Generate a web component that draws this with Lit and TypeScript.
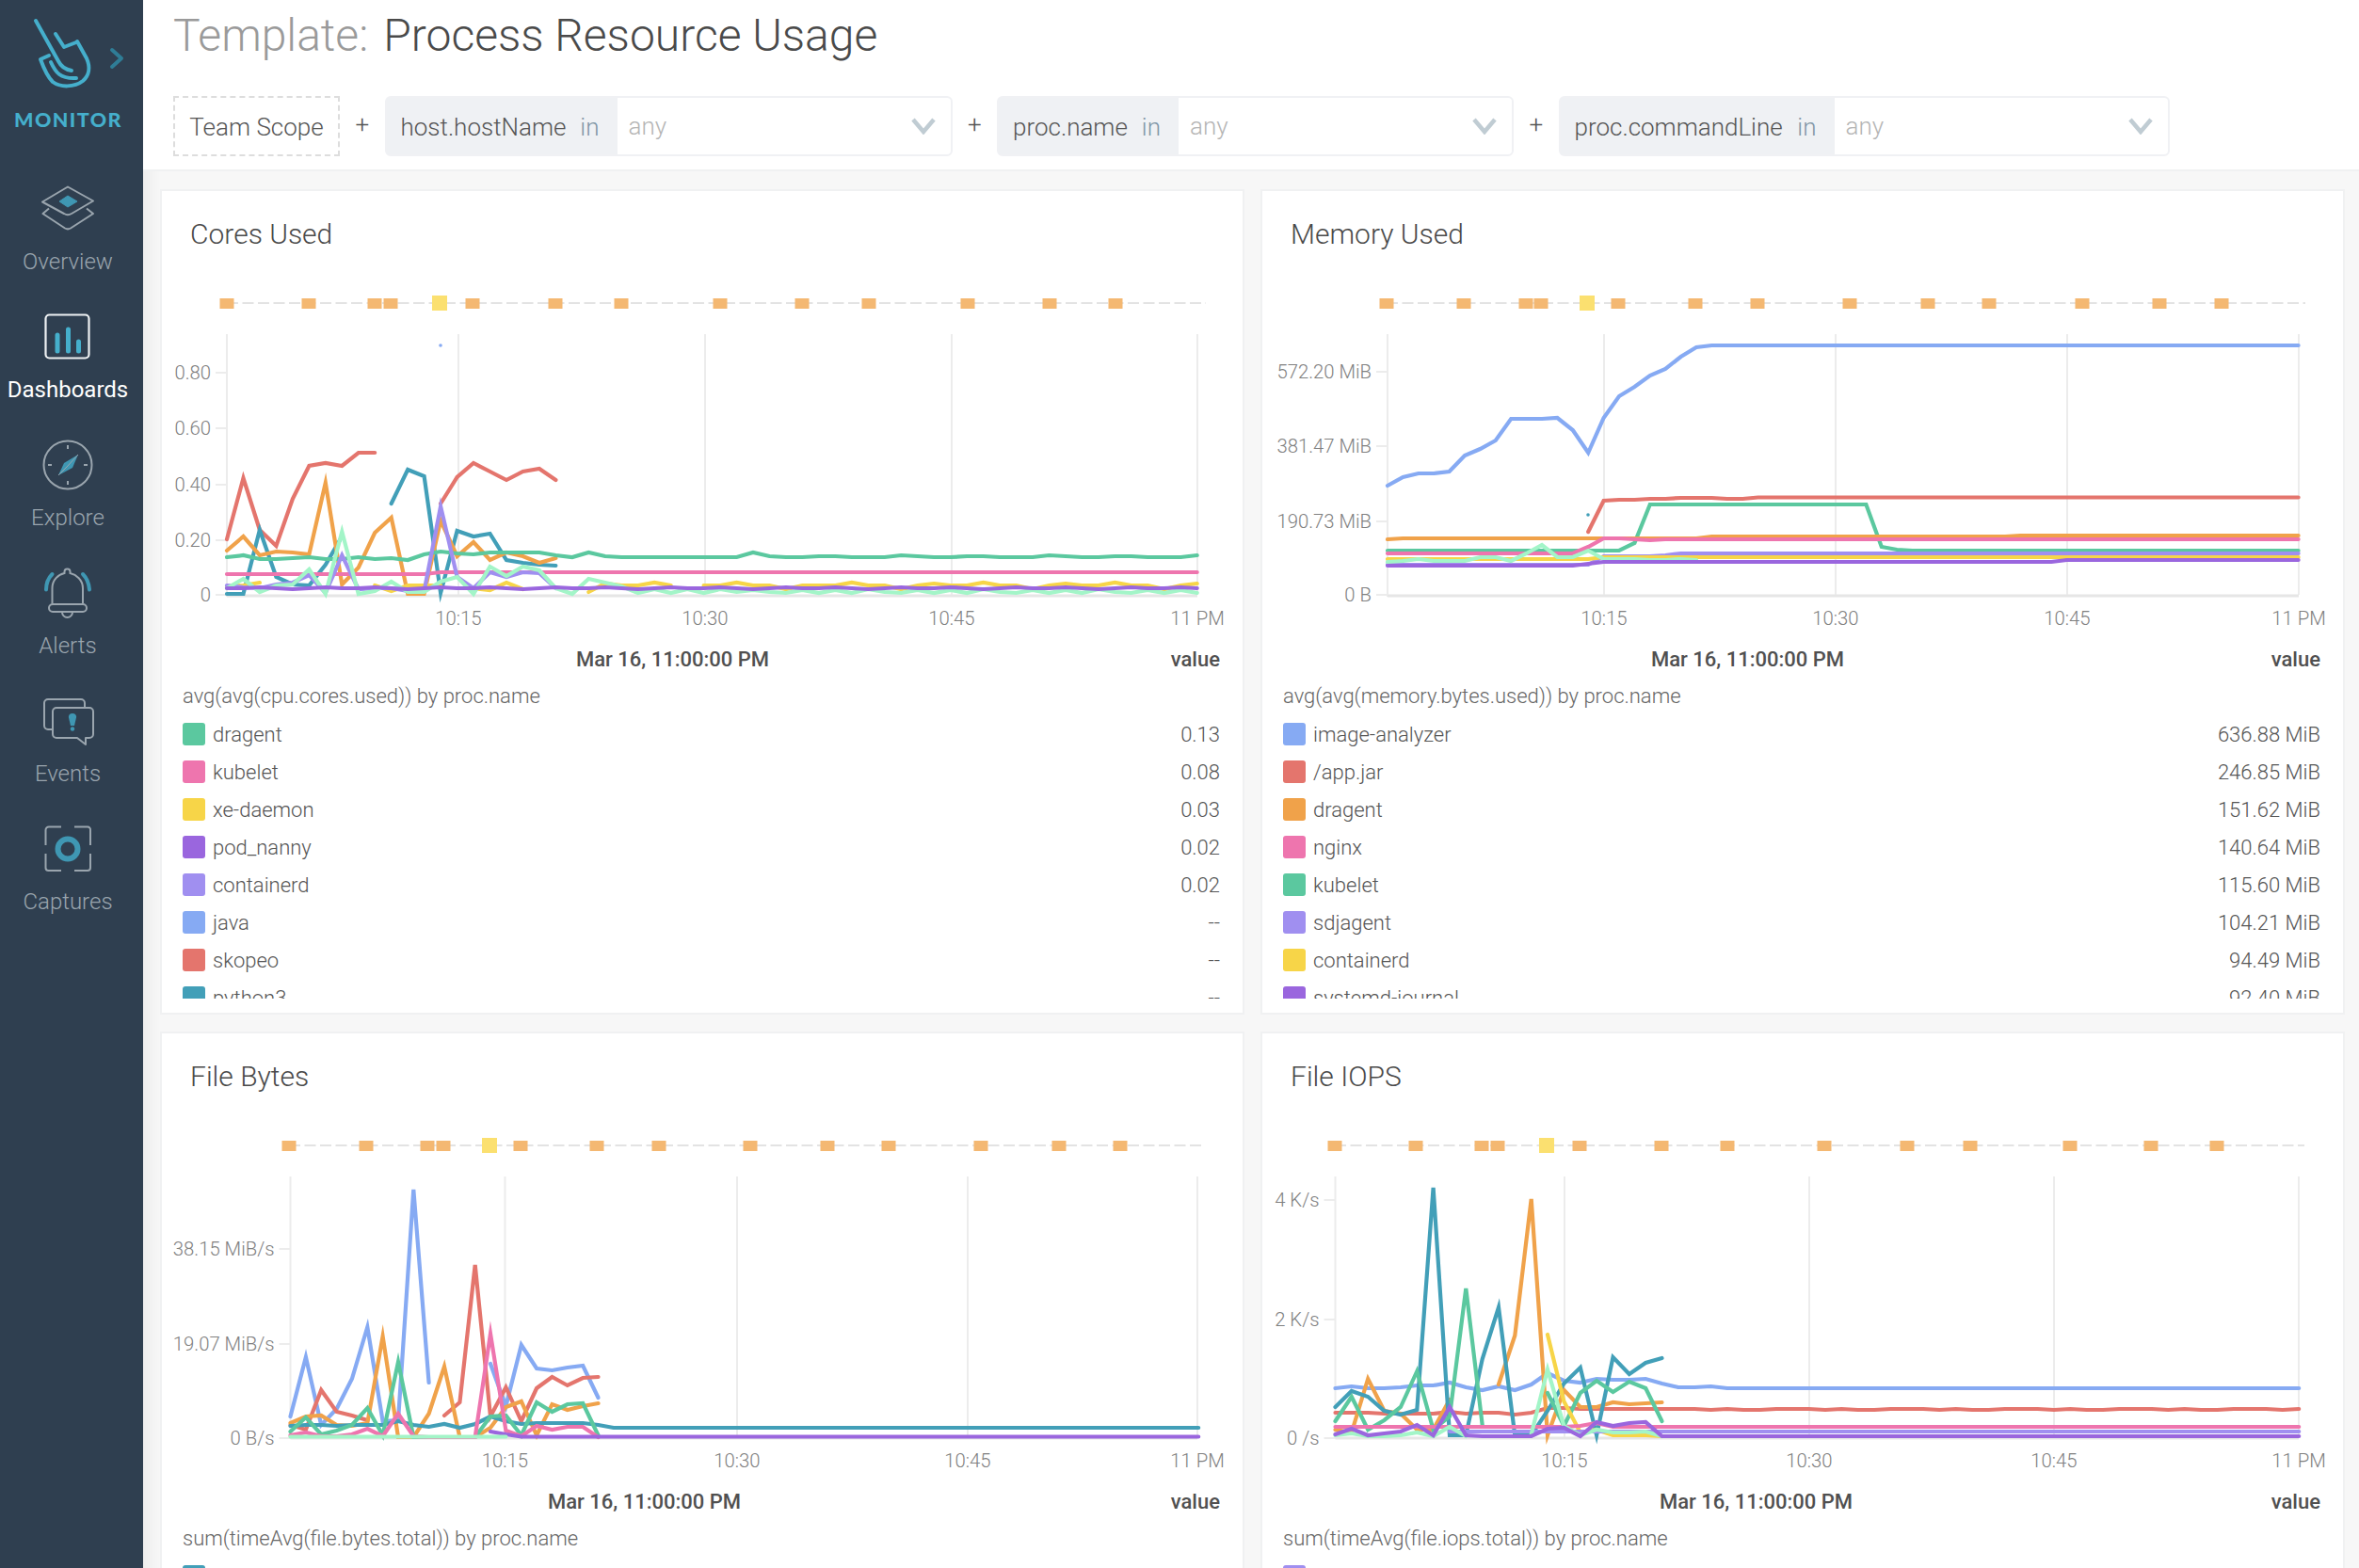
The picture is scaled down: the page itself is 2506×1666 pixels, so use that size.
import { LitElement, html, css, svg } from 'lit';
import { customElement } from 'lit/decorators.js';

const C = {
  blue: '#86aaf3',
  red: '#e4756d',
  orange: '#f0a24a',
  green: '#5bc89f',
  pink: '#ee75ae',
  yellow: '#f7d548',
  purple: '#9a66de',
  lilac: '#a08ff0',
  teal: '#429fb8',
  mint: '#a3f5c8',
};

type Seg = { start: number; h: number[] };
type Series = { color: string; segs: Seg[] };

const flat = (n: number, v: number) => Array(n).fill(v);
const cycle = (n: number, p: number[]) => Array.from({ length: n }, (_, i) => p[i % p.length]);
const s = (color: string, ...segs: [number, number[]][]): Series => ({
  color,
  segs: segs.map(([start, h]) => ({ start, h })),
});

const cores: Series[] = [
  s(C.red, [0, [59, 124, 69, 52, 102, 137, 140, 137, 151, 151]], [13, [97, 125, 140, 131, 122, 131, 134, 122]]),
  s(C.teal, [0, [1, 1, 69, 19, 11, 10, 32, 62]], [10, [97, 133, 126, 2, 68, 62, 65, 37, 34, 32, 31]]),
  s(C.orange, [0, [47, 62, 42, 46, 45, 43, 119, 11, 29, 66, 82, 1, 1, 79, 41, 56, 37, 45, 41, 34, 39]]),
  s(C.green, [0, [40, 42, 38, 38, 39, 40, 38, 38, 40, 38, 39, 37, 43, 46, 44, 43, 45, 45, 45, 45, 42, 40, 45, 41, ...flat(8, 40), 45, 41, ...cycle(26, [40, 40, 41, 41, 40, 40, 40, 42, 41])]]),
  s(C.pink, [0, [...flat(13, 22), ...flat(47, 24)]]),
  s(C.yellow, [0, [9, 10, 13]], [9, [10, 4, 10, 10, 10]], [15, [7, 5, 13, 6]], [22, [3, 12, 10, 10, 13, 10]], [29, [10, 10, 13, 10, 10, 6, 10, ...cycle(24, [10, 10, 13, 10, 10, 6, 10, 12])]]),
  s(C.lilac, [0, [10, 8, 7, 11, 13, 21, 2, 42, 6, 7, 7, 4, 4, 94, 19, 7, 24, 19, 24, 23, 7]]),
  s(C.mint, [0, [7, 17, 3, 10, 11, 27, 1, 67, 1, 4, 14, 3, 3, 14, 19, 1, 30, 20, 30, 26, 7, 1, 17, 13, 9, 2, 6, 2, 6, 2, 6, 3, 5, 3, 2, 5, 2, ...cycle(23, [5, 2, 6, 3, 2, 5, 2])]]),
  s(C.purple, [0, [...cycle(60, [7, 7, 8, 7, 6, 7, 8])]]),
];

const memory: Series[] = [
  s(C.blue, [0, [116, 125, 129, 129, 131, 148, 155, 164, 187, 187, 187, 188, 175, 151, 188, 211, 221, 233, 240, 253, 263, 265, ...flat(38, 265)]]),
  s(C.green, [0, [...flat(16, 47), 55, 96, ...flat(14, 96), 51, 48, ...flat(26, 47)]]),
  s(C.orange, [0, [59, ...flat(20, 60), ...flat(20, 62), ...flat(19, 63)]]),
  s(C.pink, [0, [...flat(13, 44), 51, 60, 60, 59, 58, ...flat(42, 59)]]),
  s(C.red, [13, [67, 100, 101, 101, 102, 102, 103, 103, 103, 102, 102, ...flat(36, 103.5)]]),
  s(C.lilac, [0, [...flat(14, 32), 41, 41, 41, 41, 42, 44, ...flat(40, 44)]]),
  s(C.yellow, [0, [...flat(14, 38), ...flat(46, 40)]]),
  s(C.mint, [0, [35, 36, 38, 36, 36, 36, 40, 40, 36, 44, 53, 40, 40, 47, 38, 38, 38, 37, 37, 38, 37]]),
  s(C.purple, [0, [...flat(13, 31), 33, ...flat(30, 35), ...flat(16, 37)]]),
];

const bytes: Series[] = [
  s(C.blue, [0, [22, 85, 13, 30, 62, 117, 17, 18, 263, 58]], [13, [78, 33, 98, 73, 71, 74, 76, 42]]),
  s(C.red, [0, [13, 8, 50, 27, 23, 18]], [10, [23, 37, 183, 22, 53, 17, 52, 64, 55, 63, 64]]),
  s(C.orange, [0, [15, 22, 23, 13, 12, 15, 107, 0, 0, 25, 75, 0, 0, 10, 32, 38, 2, 35, 29, 33, 36]]),
  s(C.teal, [0, [12, 13, 13, 12, 13, 13, 13, 17, 13, 11, 14, 10, 14, 22, 17, 14, 15, 15, 15, 15, 13, ...flat(39, 10)]]),
  s(C.green, [0, [6, 21, 3, 7, 13, 31, 2, 80, 0, 0, 0, 0, 0, 22, 23, 2, 37, 27, 35, 36, 2]]),
  s(C.pink, [0, [2, 5, 1, 1, 3, 9, 1, 25, 1, 0, 0, 0, 0, 110, 7, 1, 12, 8, 11, 11, 0]]),
  s(C.purple, [13, [6, 3, ...flat(45, 0.5)]]),
  s(C.mint, [0, flat(15, 0.5)]),
];

const iops: Series[] = [
  s(C.blue, [0, [52, 54, 52, 52, 53, 55, 55, 58, 53, 50, 54, 50, 56, 68, 60, 58, 62, 61, 61, 62, 57, 53, 53, 54, ...flat(36, 52)]]),
  s(C.red, [0, [26, 26, 26, 25, 25, 25, 25, 27, 25, 26, 26, 24, 26, 31, 31, 30, 30, 30, 30, 30, 30, ...cycle(39, [30, 30, 29, 30, 29, 29, 30])]]),
  s(C.orange, [0, [8, 5, 62, 28, 25, 8, 8, 40]], [10, [56, 108, 253, 2, 50, 32, 32, 37, 35, 36, 37]]),
  s(C.teal, [0, [32, 49, 43, 28, 24, 29, 265, 2, 2, 83, 138, 2, 2, 28, 57, 74, 2, 85, 67, 79, 84]]),
  s(C.green, [0, [17, 43, 8, 18, 32, 70, 8, 22, 158, 13]], [13, [47, 12, 47, 60, 48, 59, 52, 17]]),
  s(C.yellow, [13, [109, 38, 5, 8, 2, 2, 2, 1]]),
  s(C.pink, [0, [...flat(15, 11), 12, 15, 11, ...flat(42, 11)]]),
  s(C.lilac, [7, flat(53, 6)]),
  s(C.mint, [0, [2, 4, 1, 1, 2, 5, 1, 11, 1]], [12, [3, 72, 12, 2, 8, 5, 5, 6, 1]]),
  s(C.purple, [0, [3, 9, 2, 4, 6, 13, 2, 32, 2, 1, 1, 1, 1, 9, 10, 1, 16, 12, 15, 16, 1, ...flat(39, 1)]]),
];

type Legend = { name: string; value: string; color: string };
type Panel = {
  title: string; left: number; top: number;
  axis: number; base: number; step: number; end: number;
  grid: [number, string][]; ticks: [number, string][];
  events: number[]; yellow: number; lineEnd: number;
  dateX: number; query: string; legend: Legend[];
  series: Series[]; dot?: [number, number, string];
};

const panels: Panel[] = [
  {
    title: 'Cores Used', left: 170, top: 201, axis: 241, base: 632, step: 17.47, end: 1272,
    grid: [[487, '10:15'], [749, '10:30'], [1011, '10:45'], [1272, '11 PM']],
    ticks: [[396, '0.80'], [455, '0.60'], [515, '0.40'], [574, '0.20'], [632, '0']],
    events: [241, 328, 398, 415, 502, 590, 660, 765, 852, 923, 1028, 1115, 1185], yellow: 467, lineEnd: 1281,
    dateX: 612, query: 'avg(avg(cpu.cores.used)) by proc.name', series: cores, dot: [468, 367, C.blue],
    legend: [
      { name: 'dragent', value: '0.13', color: C.green },
      { name: 'kubelet', value: '0.08', color: C.pink },
      { name: 'xe-daemon', value: '0.03', color: C.yellow },
      { name: 'pod_nanny', value: '0.02', color: C.purple },
      { name: 'containerd', value: '0.02', color: C.lilac },
      { name: 'java', value: '--', color: C.blue },
      { name: 'skopeo', value: '--', color: C.red },
      { name: 'python3', value: '--', color: C.teal },
    ],
  },
  {
    title: 'Memory Used', left: 1339, top: 201, axis: 1474, base: 632, step: 16.4, end: 2442,
    grid: [[1704, '10:15'], [1950, '10:30'], [2196, '10:45'], [2442, '11 PM']],
    ticks: [[395, '572.20 MiB'], [474, '381.47 MiB'], [554, '190.73 MiB'], [632, '0 B']],
    events: [1473, 1555, 1621, 1637, 1719, 1801, 1867, 1965, 2048, 2113, 2212, 2294, 2360], yellow: 1686, lineEnd: 2449,
    dateX: 1754, query: 'avg(avg(memory.bytes.used)) by proc.name', series: memory, dot: [1687, 547, C.teal],
    legend: [
      { name: 'image-analyzer', value: '636.88 MiB', color: C.blue },
      { name: '/app.jar', value: '246.85 MiB', color: C.red },
      { name: 'dragent', value: '151.62 MiB', color: C.orange },
      { name: 'nginx', value: '140.64 MiB', color: C.pink },
      { name: 'kubelet', value: '115.60 MiB', color: C.green },
      { name: 'sdjagent', value: '104.21 MiB', color: C.lilac },
      { name: 'containerd', value: '94.49 MiB', color: C.yellow },
      { name: 'systemd-journal', value: '92.40 MiB', color: C.purple },
    ],
  },
  {
    title: 'File Bytes', left: 170, top: 1096, axis: 308.5, base: 1527, step: 16.35, end: 1272,
    grid: [[536.5, '10:15'], [783, '10:30'], [1028, '10:45'], [1272, '11 PM']],
    ticks: [[1327, '38.15 MiB/s'], [1428, '19.07 MiB/s'], [1528, '0 B/s']],
    events: [307, 389, 454, 471, 553, 634, 700, 797, 879, 944, 1042, 1125, 1190], yellow: 520, lineEnd: 1279,
    dateX: 582, query: 'sum(timeAvg(file.bytes.total)) by proc.name', series: bytes,
    legend: [{ name: '', value: '', color: C.teal }],
  },
  {
    title: 'File IOPS', left: 1339, top: 1096, axis: 1418.5, base: 1527, step: 17.35, end: 2442,
    grid: [[1662, '10:15'], [1922, '10:30'], [2182, '10:45'], [2442, '11 PM']],
    ticks: [[1275, '4 K/s'], [1402, '2 K/s'], [1528, '0 /s']],
    events: [1418, 1504, 1574, 1591, 1678, 1765, 1835, 1938, 2026, 2093, 2199, 2285, 2355], yellow: 1643, lineEnd: 2448,
    dateX: 1763, query: 'sum(timeAvg(file.iops.total)) by proc.name', series: iops,
    legend: [{ name: '', value: '', color: C.lilac }],
  },
];

const filters = [
  { name: 'host.hostName', width: 603, label: 245 },
  { name: 'proc.name', width: 549, label: 191 },
  { name: 'proc.commandLine', width: 649, label: 291 },
];

const ACCENT = '#3f97b3';
const GREY = '#9aa5ae';

const navIcons: Record<string, unknown> = {
  Overview: svg`
    <path d="M28 4.5 55 19.5 32 33a8 8 0 0 1-8 0L1 20.5z" fill="none" stroke=${GREY} stroke-width="2" stroke-linejoin="round"/>
    <path d="M8 27.5 1.5 33 25 48.5a6 6 0 0 0 6 0L55 33l-7-5.5" fill="none" stroke=${GREY} stroke-width="2" stroke-linejoin="round"/>
    <path d="M28 14 38 20 28 26 19 20z" fill=${ACCENT} stroke=${ACCENT} stroke-linejoin="round"/>`,
  Dashboards: svg`
    <rect x="4.5" y="4.5" width="46" height="46" rx="4" fill="none" stroke="#eef1f3" stroke-width="2.2"/>
    <path d="M17 26v17M28.5 20v23M39.5 33v10" stroke="#45afcc" stroke-width="5" stroke-linecap="round"/>`,
  Explore: svg`
    <circle cx="28" cy="28" r="25.5" fill="none" stroke=${GREY} stroke-width="2"/>
    <path d="M28 7v4M28 45v4M7 28h4M45 28h4" stroke=${GREY} stroke-width="2"/>
    <path d="M39 17 24 26 18 39 33 31z" fill=${ACCENT}/>
    <path d="M39 17 27 30 18 39" stroke=${GREY} stroke-width="1" fill="none"/>`,
  Alerts: svg`
    <path d="M11.5 39V23C11.5 14 18 8.5 24.5 7V5.5a3 3 0 0 1 6 0V7C37 8.5 44 14 44 23V39" fill="none" stroke=${GREY} stroke-width="2"/>
    <rect x="8" y="40" width="40" height="8" rx="4" fill="none" stroke=${GREY} stroke-width="2"/>
    <path d="M22 48.5a5.5 5.5 0 0 0 11 0" fill="none" stroke=${GREY} stroke-width="2"/>
    <path d="M11.5 8C7.5 12 5 18 5 24.5M44 8c4 4 6.5 10 7 16.5" fill="none" stroke=${ACCENT} stroke-width="4" stroke-linecap="round"/>`,
  Events: svg`
    <path d="M46 13V9a4 4 0 0 0-4-4H7a4 4 0 0 0-4 4v24a4 4 0 0 0 4 4h5" fill="none" stroke=${GREY} stroke-width="2"/>
    <path d="M16 14h35a4 4 0 0 1 4 4v24a4 4 0 0 1-4 4h-4v7l-9-7H16a4 4 0 0 1-4-4V18a4 4 0 0 1 4-4z" fill="none" stroke=${GREY} stroke-width="2" stroke-linejoin="round"/>
    <path d="M33 20c3 0 4.5 2 4 4.5L35 33h-4l-2-8.5C28.5 22 30 20 33 20z" fill=${ACCENT}/>
    <circle cx="33" cy="36.5" r="2.2" fill=${ACCENT}/>`,
  Captures: svg`
    <path d="M4.5 24V8a3.5 3.5 0 0 1 3.5-3.5h13M35 4.5h14a3 3 0 0 1 3 3.5v16M4.5 33v15a3 3 0 0 0 3 3H21M35 51h14a3 3 0 0 0 3-3V33" fill="none" stroke=${GREY} stroke-width="2"/>
    <circle cx="28" cy="28" r="10.5" fill="none" stroke=${ACCENT} stroke-width="6"/>`,
};

const navItems = ['Overview', 'Dashboards', 'Explore', 'Alerts', 'Events', 'Captures'];

@customElement('app-root')
export class AppRoot extends LitElement {
  static styles = css`
    :host {
      display: block;
      width: 2506px;
      height: 1666px;
      overflow: hidden;
      font-family: Roboto, "Liberation Sans", sans-serif;
      font-weight: 300;
      color: #555;
    }
    .page { display: flex; height: 100%; }

    .side {
      width: 152px;
      flex: none;
      background: #2f3f50;
      display: flex;
      flex-direction: column;
    }
    .logo { display: block; height: 112px; }
    .brand {
      height: 30px;
      line-height: 30px;
      padding-right: 7px;
      text-align: center;
      font-family: Lato, sans-serif;
      font-weight: 900;
      font-size: 21.5px;
      letter-spacing: 1.4px;
      color: #45afcc;
    }
    .nav { margin-top: 44px; display: flex; flex-direction: column; }
    .nav-item {
      height: 136px;
      padding: 8px 8px 0 0;
      box-sizing: border-box;
      display: flex;
      flex-direction: column;
      align-items: center;
      font-size: 24px;
      color: #9aa5ae;
    }
    .nav-item.active { color: #fff; font-weight: 400; }
    .nav-item svg { display: block; overflow: visible; }
    .nav-item span { margin-top: 12px; line-height: 32px; white-space: nowrap; }

    .main { flex: 1; display: flex; flex-direction: column; min-width: 0; background: #f7f7f7; }
    .head {
      height: 180px;
      background: #fff;
      border-bottom: 2px solid #f0f1f2;
      padding-left: 32px;
      flex: none;
    }
    h1 {
      margin: 0;
      padding-top: 12px;
      height: 102px;
      box-sizing: border-box;
      font-size: 48px;
      line-height: 52px;
      font-weight: 300;
      color: #4a4a4a;
    }
    h1 em { font-style: normal; color: #9a9a9a; margin-right: 16px; }
    .filters { display: flex; font-size: 26px; }
    .scope {
      width: 177px;
      height: 64px;
      box-sizing: border-box;
      border: 2px dashed #ddd;
      padding-top: 2px;
      display: flex;
      align-items: center;
      justify-content: center;
      white-space: nowrap;
    }
    .plus { width: 47.5px; height: 60px; display: flex; align-items: center; justify-content: center; flex: none; }
    .filter {
      height: 64px;
      box-sizing: border-box;
      border: 2px solid #f0f1f4;
      border-radius: 6px;
      display: flex;
      align-items: stretch;
      flex: none;
    }
    .filter .label {
      background: #eff1f4;
      display: flex;
      align-items: center;
      justify-content: space-between;
      padding: 2px 19px 0 15px;
      box-sizing: border-box;
      flex: none;
      white-space: nowrap;
    }
    .filter .label i { font-style: normal; color: #7f96a6; }
    .filter .any { flex: 1; display: flex; align-items: center; justify-content: space-between; padding: 0 16px 0 12px; color: #b5b5b5; }
    .filter svg { display: block; }

    .grid {
      flex: 1;
      display: grid;
      grid-template-columns: 1fr 1fr;
      grid-auto-rows: 877px;
      gap: 18px 17px;
      padding: 19px 15px 0 18px;
      min-height: 0;
      background: linear-gradient(to right, #eeeeee, #f7f7f7 18px);
    }
    .card {
      background: #fff;
      border: 2px solid #f0f1f2;
      min-width: 0;
      overflow: hidden;
      display: flex;
      flex-direction: column;
    }
    .card h2 {
      margin: 0;
      height: 94px;
      line-height: 92px;
      padding-left: 30px;
      font-size: 30px;
      font-weight: 300;
      color: #4a4a4a;
      flex: none;
    }
    .card svg.plot { display: block; flex: none; }
    .plot text { font-family: Roboto, sans-serif; font-size: 20.3px; font-weight: 300; fill: #808080; }
    .row { height: 39px; display: flex; align-items: center; font-size: 22px; font-weight: 500; color: #505050; padding-right: 24px; flex: none; }
    .row .date { flex: 1; }
    .query { height: 40px; line-height: 40px; padding-left: 22px; font-size: 22px; color: #666; flex: none; white-space: nowrap; }
    .legend { height: 301px; overflow: hidden; flex: none; padding: 0 24px 0 22px; }
    .legend div { height: 40px; display: flex; align-items: center; font-size: 22px; color: #555; }
    .legend b { width: 24px; height: 24px; border-radius: 3px; margin-right: 8px; flex: none; }
    .legend span { flex: 1; }
    .legend u { text-decoration: none; }
  `;

  plot(p: Panel) {
    const ox = p.left + 2;
    const oy = p.top + 96;
    const gridLine = '#ececec';
    return svg`
      <g transform="translate(${-ox} ${-oy})">
        <line x1=${p.events[0]} x2=${p.lineEnd} y1=${p.top + 121} y2=${p.top + 121} stroke="#e3e3e3" stroke-width="2" stroke-dasharray="12 4.5"/>
        ${p.events.map(x => svg`<rect x=${x - 7.5} y=${p.top + 116} width="15" height="11" fill="#f4b872"/>`)}
        <rect x=${p.yellow - 8} y=${p.top + 113} width="16" height="16" fill="#fbe070"/>

        <line x1=${p.axis} x2=${p.axis} y1=${p.top + 154} y2=${p.base + 2} stroke=${gridLine} stroke-width="2"/>
        ${p.grid.map(([x, l]) => svg`
          <line x1=${x} x2=${x} y1=${p.top + 154} y2=${p.base} stroke=${gridLine} stroke-width="2"/>
          <text x=${x} y=${p.top + 463} text-anchor="middle">${l}</text>`)}
        ${p.ticks.map(([y, l]) => svg`
          <line x1=${p.axis - 12} x2=${p.axis} y1=${y} y2=${y} stroke=${gridLine} stroke-width="2"/>
          <text x=${p.axis - 17} y=${y + 6.5} text-anchor="end">${l}</text>`)}
        <line x1=${p.axis} x2=${p.end} y1=${p.base + 1} y2=${p.base + 1} stroke="#e6e6e6" stroke-width="3"/>

        ${p.series.map(ser => ser.segs.map(seg => svg`
          <polyline fill="none" stroke=${ser.color} stroke-width="4.2" stroke-linecap="round" stroke-linejoin="miter" stroke-miterlimit="8"
            points=${seg.h.map((h, i) => `${(p.axis + (seg.start + i) * p.step).toFixed(1)},${p.base - h}`).join(' ')}/>`))}
        ${p.dot ? svg`<circle cx=${p.dot[0]} cy=${p.dot[1]} r="1.8" fill=${p.dot[2]}/>` : ''}
      </g>`;
  }

  render() {
    return html`
      <div class="page">
        <aside class="side">
          <svg class="logo" width="152" height="112" viewBox="0 0 152 112" fill="none" stroke="#45afcc" stroke-width="4" stroke-linecap="round" stroke-linejoin="round">
            <path d="M38 22 62 65c3 6 8 9 14 10"/>
            <path d="M59 36 68 50 81 45"/>
            <path d="M82 44 92 62c4 9 3 18-4 24-9 7-24 7-32 1-5-5-9-13-13-24l9-4"/>
            <path d="M54 66c5 11 10 18 27 17"/>
            <path d="M119 53 129 62 119 71" stroke="#2f7d96"/>
          </svg>
          <div class="brand">MONITOR</div>
          <nav class="nav">
            ${navItems.map(n => html`
              <div class="nav-item ${n === 'Dashboards' ? 'active' : ''}">
                <svg width="56" height="56" viewBox="0 0 56 56">${navIcons[n]}</svg>
                <span>${n}</span>
              </div>`)}
          </nav>
        </aside>
        <div class="main">
          <header class="head">
            <h1><em>Template:</em>Process Resource Usage</h1>
            <div class="filters">
              <div class="scope">Team Scope</div>
              ${filters.map(f => html`
                <div class="plus">+</div>
                <div class="filter" style="width:${f.width}px">
                  <div class="label" style="width:${f.label}px"><span>${f.name}</span><i>in</i></div>
                  <div class="any">
                    <span>any</span>
                    <svg width="26" height="18" viewBox="0 0 26 18" fill="none" stroke="#c0ccd3" stroke-width="4.5"><path d="M2 2 13 15 24 2"/></svg>
                  </div>
                </div>`)}
            </div>
          </header>
          <section class="grid">
            ${panels.map(p => html`
              <article class="card">
                <h2>${p.title}</h2>
                <svg class="plot" width="1148" height="384">${this.plot(p)}</svg>
                <div class="row">
                  <span class="date" style="padding-left:${p.dateX - p.left - 2}px">Mar 16, 11:00:00 PM</span>
                  <span>value</span>
                </div>
                <div class="query">${p.query}</div>
                <div class="legend">
                  ${p.legend.map(l => html`<div><b style="background:${l.color}"></b><span>${l.name}</span><u>${l.value}</u></div>`)}
                </div>
              </article>`)}
          </section>
        </div>
      </div>
    `;
  }
}
